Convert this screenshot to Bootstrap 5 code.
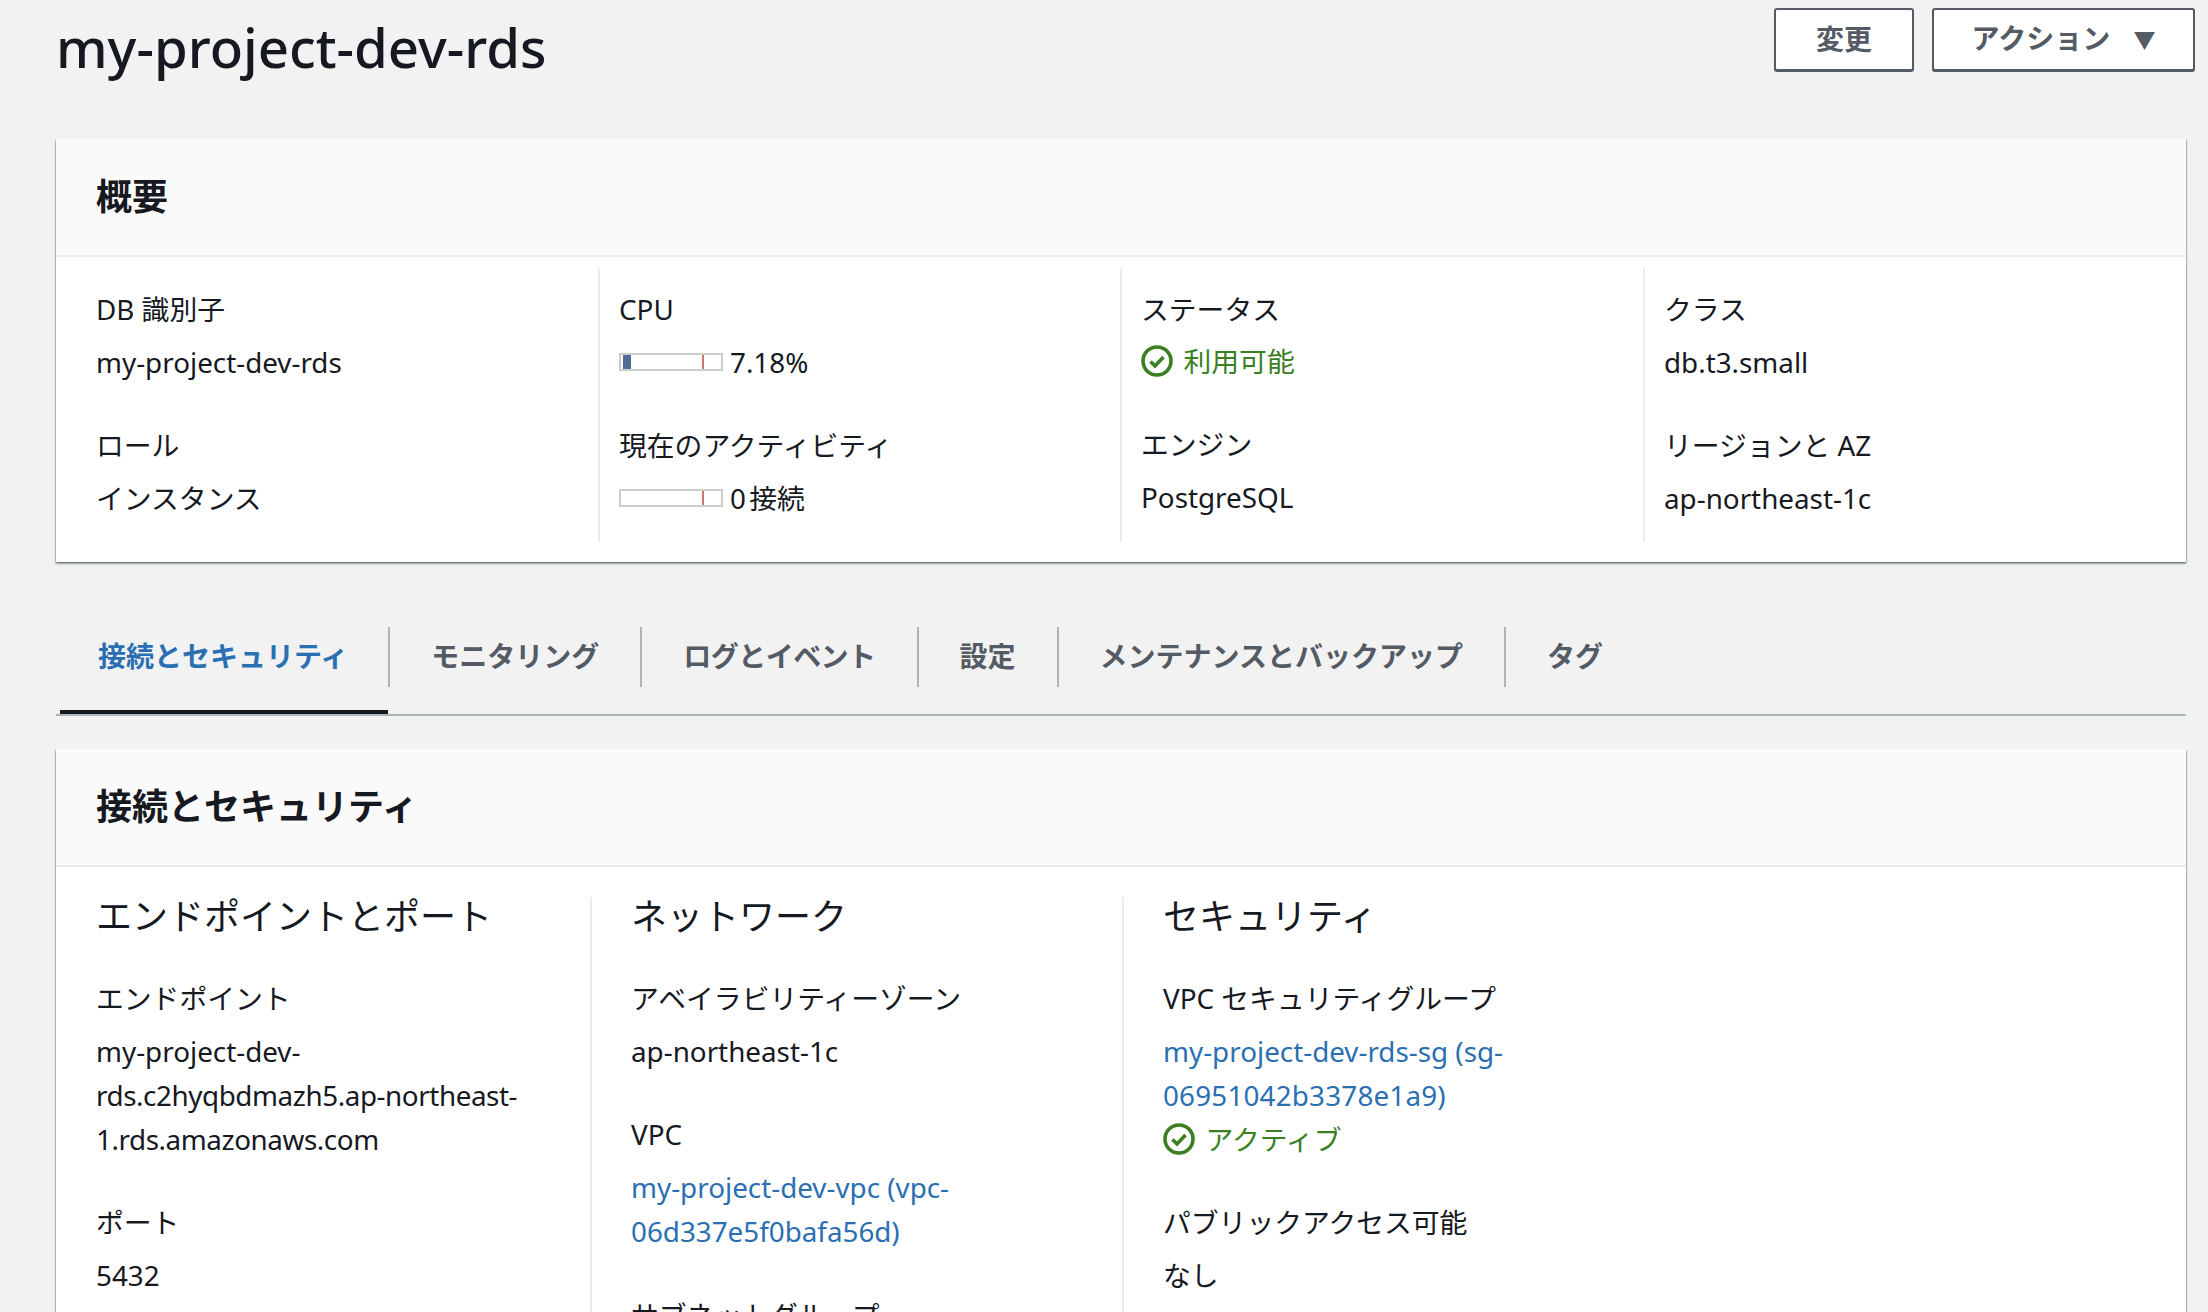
<!DOCTYPE html>
<html lang="ja">
<head>
<meta charset="utf-8">
<title>my-project-dev-rds</title>
<link href="https://cdn.jsdelivr.net/npm/bootstrap@5.3.0/dist/css/bootstrap.min.css" rel="stylesheet">
<style>
html,body{height:1312px;overflow:hidden}
body{background:#f2f2f3;color:#16191f;font-family:"Noto Sans","Noto Sans CJK JP",sans-serif;font-size:27.8px;line-height:44px}
.pg{padding:8px 13px 0 56px;height:1312px;overflow:hidden}
.top-bar{height:131px}
.pg-title{font-size:54.5px;line-height:64px;font-weight:500;margin:0;padding-top:7px}
.btn-gap{gap:18px}
.act-btn{background:#fff;border:2px solid #545b64;border-radius:3px;color:#545b64;font-size:28px;font-weight:700;line-height:44px;height:63px;padding:0 0 2px;box-shadow:0 1px 0 #545b64}
.act-one{width:140px}
.act-two{width:263px}
.act-btn .caret-mark{font-size:22px;margin-left:16px;vertical-align:1px}
.panel{border:0;border-radius:0;margin-right:9px;box-shadow:0 2px 2px rgba(0,28,36,.35),1px 1px 1px rgba(0,28,36,.18),-1px 1px 1px rgba(0,28,36,.18)}
.panel-head{background:#fafafa;border-bottom:2px solid #eaeded;border-radius:0!important;height:118px;padding:0 40px;font-size:36px;font-weight:700;line-height:1}
.grid-four{display:grid;grid-template-columns:542px 522px 523px 1fr;padding:11px 0 20px}
.grid-three{display:grid;grid-template-columns:534px 532px 1fr;padding:30px 0 0}
.cell{padding:18.5px 0 21.5px 19px;border-left:2px solid #eaeded}
.cell:first-child{padding-left:40px;border-left:0}
.cell-lg{padding:0 0 0 39px;border-left:2px solid #eaeded;height:420px}
.cell-lg:first-child{border-left:0;padding-left:40px}
.sec-title{font-size:36px;line-height:40px;font-weight:400;margin:0 0 39px}
.kv{margin-bottom:39.5px}
.kv:last-child{margin-bottom:0}
.kv-label{margin-bottom:9px}
.meter{width:104px;height:18px;border:2px solid #ccc;background:#fff;position:relative;display:block;flex:none}
.meter-fill{position:absolute;left:2px;top:0;bottom:0;background:#4f7096}
.meter-limit{position:absolute;left:81px;top:0;bottom:0;width:2px;background:#d0756c}
.meter-row{gap:7px}
.tight-sp{word-spacing:-4px}
.ok-text{color:#3a7f22;gap:10.5px}
.ok-text svg{flex:none}
.ok-lift{margin-top:-1px;margin-bottom:1px}
.sq{letter-spacing:-.42px}
.wd{letter-spacing:.2px}
a.lnk{color:#2b6fb3;text-decoration:none}
.tabs-bar{margin:65px 9px 33px 0;border-bottom:2px solid #aab7b8;list-style:none;padding:0}
.tab-item{position:relative;padding-bottom:27px}
.tab-link{display:block;height:60px;line-height:58px;padding:0 41px;font-size:28px;font-weight:700;color:#545b64;border-right:2px solid #aab7b8;white-space:nowrap}
.tab-item:first-child .tab-link{color:#2b6fb3;padding:0 40px 0 42px}
.tab-item:nth-child(3) .tab-link{letter-spacing:-.55px}
.tab-item:last-child .tab-link{border-right:0}
.tab-item.is-on::after{content:"";position:absolute;left:4px;right:2px;bottom:0;height:4px;background:#16191f}
</style>
</head>
<body>
<div class="pg">
  <div class="top-bar d-flex justify-content-between align-items-start">
    <h1 class="pg-title">my-project-dev-rds</h1>
    <div class="d-flex btn-gap">
      <button type="button" class="btn act-btn act-one">変更</button>
      <button type="button" class="btn act-btn act-two">アクション <span class="caret-mark">▼</span></button>
    </div>
  </div>

  <div class="card panel">
    <div class="card-header panel-head d-flex align-items-center">概要</div>
    <div class="grid-four">
      <div class="cell">
        <div class="kv"><div class="kv-label">DB 識別子</div><div>my-project-dev-rds</div></div>
        <div class="kv"><div class="kv-label">ロール</div><div>インスタンス</div></div>
      </div>
      <div class="cell">
        <div class="kv"><div class="kv-label">CPU</div><div class="d-flex align-items-center meter-row"><span class="meter"><span class="meter-fill" style="width:8px"></span><span class="meter-limit"></span></span><span>7.18%</span></div></div>
        <div class="kv"><div class="kv-label">現在のアクティビティ</div><div class="d-flex align-items-center meter-row"><span class="meter"><span class="meter-limit"></span></span><span class="tight-sp">0 接続</span></div></div>
      </div>
      <div class="cell">
        <div class="kv"><div class="kv-label">ステータス</div><div class="ok-text ok-lift d-flex align-items-center"><svg width="32" height="32" viewBox="0 0 32 32" fill="none"><circle cx="16" cy="16" r="14" stroke="#3a7f22" stroke-width="3.6"/><path d="M9.5 16.5l4.5 4.5 8.5-9" stroke="#3a7f22" stroke-width="3.6"/></svg><span>利用可能</span></div></div>
        <div class="kv"><div class="kv-label">エンジン</div><div>PostgreSQL</div></div>
      </div>
      <div class="cell">
        <div class="kv"><div class="kv-label">クラス</div><div>db.t3.small</div></div>
        <div class="kv"><div class="kv-label">リージョンと AZ</div><div>ap-northeast-1c</div></div>
      </div>
    </div>
  </div>

  <ul class="nav tabs-bar">
    <li class="tab-item is-on"><a class="tab-link text-decoration-none" href="#">接続とセキュリティ</a></li>
    <li class="tab-item"><a class="tab-link text-decoration-none" href="#">モニタリング</a></li>
    <li class="tab-item"><a class="tab-link text-decoration-none" href="#">ログとイベント</a></li>
    <li class="tab-item"><a class="tab-link text-decoration-none" href="#">設定</a></li>
    <li class="tab-item"><a class="tab-link text-decoration-none" href="#">メンテナンスとバックアップ</a></li>
    <li class="tab-item"><a class="tab-link text-decoration-none" href="#">タグ</a></li>
  </ul>

  <div class="card panel">
    <div class="card-header panel-head d-flex align-items-center">接続とセキュリティ</div>
    <div class="grid-three">
      <div class="cell-lg">
        <h3 class="sec-title">エンドポイントとポート</h3>
        <div class="kv"><div class="kv-label">エンドポイント</div><div>my-project-dev-<br><span class="sq">rds.c2hyqbdmazh5.ap-northeast-<br>1.rds.amazonaws.com</span></div></div>
        <div class="kv"><div class="kv-label">ポート</div><div>5432</div></div>
      </div>
      <div class="cell-lg">
        <h3 class="sec-title">ネットワーク</h3>
        <div class="kv"><div class="kv-label">アベイラビリティーゾーン</div><div>ap-northeast-1c</div></div>
        <div class="kv"><div class="kv-label">VPC</div><div><a class="lnk" href="#">my-project-dev-vpc (vpc-<br>06d337e5f0bafa56d)</a></div></div>
        <div class="kv"><div class="kv-label">サブネットグループ</div></div>
      </div>
      <div class="cell-lg">
        <h3 class="sec-title">セキュリティ</h3>
        <div class="kv"><div class="kv-label">VPC セキュリティグループ</div><div><a class="lnk" href="#">my-project-dev-rds-sg (sg-<br><span class="wd">06951042b3378e1a9)</span></a></div><div class="ok-text d-flex align-items-center"><svg width="32" height="32" viewBox="0 0 32 32" fill="none"><circle cx="16" cy="16" r="14" stroke="#3a7f22" stroke-width="3.6"/><path d="M9.5 16.5l4.5 4.5 8.5-9" stroke="#3a7f22" stroke-width="3.6"/></svg><span>アクティブ</span></div></div>
        <div class="kv"><div class="kv-label">パブリックアクセス可能</div><div>なし</div></div>
      </div>
    </div>
  </div>
</div>
</body>
</html>
